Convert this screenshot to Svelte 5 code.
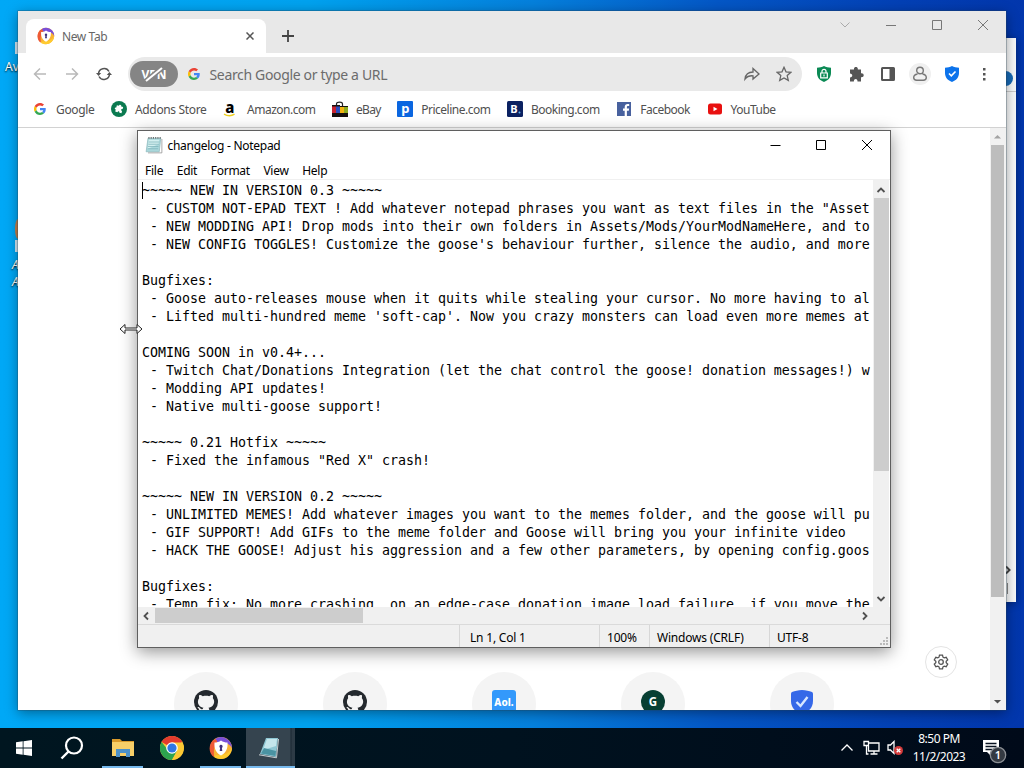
<script>
  const bookmarks = [
    { name: "Google", icon: "google" },
    { name: "Addons Store", icon: "addons" },
    { name: "Amazon.com", icon: "amazon" },
    { name: "eBay", icon: "ebay" },
    { name: "Priceline.com", icon: "priceline" },
    { name: "Booking.com", icon: "booking" },
    { name: "Facebook", icon: "facebook" },
    { name: "YouTube", icon: "youtube" },
  ]

  const menus = ["File", "Edit", "Format", "View", "Help"]

  const shortcuts = ["github", "github", "aol", "g", "shield"]

  const changelog = `~~~~~ NEW IN VERSION 0.3 ~~~~~
 - CUSTOM NOT-EPAD TEXT ! Add whatever notepad phrases you want as text files in the "Asset
 - NEW MODDING API! Drop mods into their own folders in Assets/Mods/YourModNameHere, and to
 - NEW CONFIG TOGGLES! Customize the goose's behaviour further, silence the audio, and more

Bugfixes:
 - Goose auto-releases mouse when it quits while stealing your cursor. No more having to al
 - Lifted multi-hundred meme 'soft-cap'. Now you crazy monsters can load even more memes at

COMING SOON in v0.4+...
 - Twitch Chat/Donations Integration (let the chat control the goose! donation messages!) w
 - Modding API updates!
 - Native multi-goose support!

~~~~~ 0.21 Hotfix ~~~~~
 - Fixed the infamous "Red X" crash!

~~~~~ NEW IN VERSION 0.2 ~~~~~
 - UNLIMITED MEMES! Add whatever images you want to the memes folder, and the goose will pu
 - GIF SUPPORT! Add GIFs to the meme folder and Goose will bring you your infinite video
 - HACK THE GOOSE! Adjust his aggression and a few other parameters, by opening config.goos

Bugfixes:
 - Temp fix: No more crashing, on an edge-case donation image load failure, if you move the`
</script>

{#snippet google()}
  <svg class="google" viewBox="0 0 48 48">
    <path fill="#EA4335" d="M24 9.5c3.5 0 6.7 1.2 9.2 3.6l6.9-6.9C35.9 2.4 30.5 0 24 0 14.6 0 6.5 5.4 2.6 13.2l8 6.2C12.4 13.7 17.7 9.5 24 9.5z" />
    <path fill="#4285F4" d="M47 24.5c0-1.6-.2-3.1-.4-4.5H24v9h12.900c-.6 3-2.300 5.500-4.800 7.200l7.700 6C44.400 38 47 31.800 47 24.500z" />
    <path fill="#FBBC05" d="M10.500 28.600c-.5-1.500-.8-3-.8-4.600s.3-3.100.8-4.600l-8-6.200C.9 16.500 0 20.100 0 24s.9 7.500 2.600 10.800l7.900-6.200z" />
    <path fill="#34A853" d="M24 48c6.500 0 11.900-2.100 15.900-5.800l-7.700-6c-2.200 1.500-4.900 2.300-8.200 2.300-6.300 0-11.600-4.200-13.500-9.900l-8 6.200C6.500 42.600 14.600 48 24 48z" />
  </svg>
{/snippet}

{#snippet secureBrowser()}
  <svg viewBox="0 0 24 24">
    <circle cx="12" cy="12" r="11" fill="#f9b233" />
    <path fill="#7a4fd8" d="M6 3a11 11 0 0 1 17 9c-2-4-6-6-11-5-4 0-5-2-6-4z" />
    <path fill="#ee5a35" d="M6 3C-1 7-1 17 5 21c0-4-1-8 2-13 2-2 1-4-1-5z" />
    <path fill="#ffcb2f" d="M5 21c8 5 17 0 18-9-3 5-7 7-12 7-3 0-5 0-6 2z" />
    <path fill="#fff" d="M12 4.500c2 1.500 4 2 6.500 2 .5 6-1.500 10.500-6.500 13-5-2.500-7-7-6.500-13 2.500 0 4.500-.5 6.500-2z" />
    <path fill="#41327c" d="M12 8.800a1.700 1.700 0 0 1 .9 3.100l.4 3h-2.600l.4-3a1.700 1.700 0 0 1 .9-3.100z" />
  </svg>
{/snippet}

{#snippet notepadIcon()}
  <svg viewBox="0 0 24 24">
    <path fill="#a9d7db" stroke="#8fb9bd" d="M4 3h17l-2 18H1.500z" />
    <path fill="#d4f0f0" d="M5 5h14l-1 6L3.500 17z" />
    <path fill="none" stroke="#7fb4ba" d="M5 8h14M4.500 11h14M4 14h14M3.500 17h14" />
    <path fill="none" stroke="#444" stroke-width="1.500" stroke-dasharray="1.500 1.500" d="M4.500 2.500h17" />
    <path fill="none" stroke="#8d8d8d" d="M22.500 4v18.500H4" />
  </svg>
{/snippet}

{#snippet bookmarkIcon(icon)}
  {#if icon == "google"}
    {@render google()}
  {:else}
    <svg viewBox="0 0 16 16">
      {#if icon == "addons"}
        <circle cx="8" cy="8" r="8" fill="#0b7a50" />
        <path fill="#fff" d="M5 5h2c0-2 2.500-2 2.500 0h2v2.200c-1.700 0-1.700 2 0 2V11.500H9.300c0-1.600-1.900-1.600-1.900 0H5V9.300c-1.700 0-1.700-2 0-2z" transform="rotate(15 8 8)" />
      {:else if icon == "amazon"}
        <text x="6.500" y="11.500" text-anchor="middle" font-size="15" font-weight="800">a</text>
        <path fill="none" stroke="#edcf20" stroke-width="1.500" d="M1 13.200c3.500 2 7.500 2 10.500 0" />
      {:else if icon == "ebay"}
        <path fill="none" stroke="#222" stroke-width="1.200" d="M4.500 5V3c0-2.500 6-2.500 6 0v2" />
        <path fill="#c92432" d="M0 4h4v9H0z" />
        <path fill="#2b4fbf" d="M4 4h4v9H4z" />
        <path fill="#f2b312" d="M8 5h4v8H8z" />
        <path fill="#8dac20" d="M12 5h4v8h-4z" />
        <path fill="#16100f" d="M0 12h16v4H0zM0 4h8v1.500H0zM8 5h8v1H8z" />
      {:else if icon == "priceline"}
        <rect width="16" height="16" rx="1" fill="#0a66e0" />
        <text x="8" y="11.500" text-anchor="middle" font-size="13" font-weight="700" fill="#fff">p</text>
      {:else if icon == "booking"}
        <rect width="16" height="16" rx="1.500" fill="#0b2161" />
        <text x="3.200" y="12.200" font-size="11" font-weight="700" fill="#fff">B</text>
        <circle cx="12.500" cy="11.500" r="1" fill="#5fb4f0" />
      {:else if icon == "facebook"}
        <rect x="1" y="1" width="14" height="14" fill="#48619e" />
        <path fill="#fff" d="M8.700 15V9.800H7V7.600h1.700V6c0-2 1.200-3 3-3h1.500v2h-1.100c-.9 0-1.200.4-1.200 1.200v1.400h2.200l-.3 2.200h-1.900V15z" />
      {:else}
        <rect x="1" y="2.500" width="14" height="11" rx="2.500" fill="#e8100f" />
        <path fill="#fff" d="M6.500 5.800l4 2.200-4 2.200z" />
      {/if}
    </svg>
  {/if}
{/snippet}

<div class="desktop">
  <div class="desk-label avast">Av</div>
  <div class="desk-chip top"></div>
  <div class="desk-chip orange"></div>
  <div class="desk-chip bottom"></div>
  <div class="desk-label any">A<br />A</div>

  <div class="back-window">
    <div class="back-bar"><i></i></div>
    <svg class="back-arrow" viewBox="0 0 10 10"><path d="M3 1.500L6.500 5 3 8.500" /></svg>
    <div class="back-grip"></div>
  </div>

  <section class="browser">
    <div class="tabstrip">
      <div class="tab">
        <span class="i18">{@render secureBrowser()}</span>
        <span class="tab-title">New Tab</span>
        <svg class="tab-close" viewBox="0 0 8 8"><path d="M.5.5l7 7M7.500.5l-7 7" /></svg>
      </div>
      <svg class="plus" viewBox="0 0 12 12"><path d="M6 0v12M0 6h12" /></svg>
      <div class="win-buttons">
        <svg viewBox="0 0 12 12"><path stroke="#aaa" d="M1.500 3.500L6 8l4.500-4.500" /></svg>
        <svg viewBox="0 0 12 12"><path d="M1 6.500h10" /></svg>
        <svg viewBox="0 0 12 12"><path d="M1.500 1.500h9v9h-9z" /></svg>
        <svg viewBox="0 0 12 12"><path d="M1 1l10 10M11 1L1 11" /></svg>
      </div>
    </div>

    <div class="toolbar">
      <svg class="nav off" viewBox="0 0 16 16"><path d="M14 8H2.500M8 2.500L2.500 8 8 13.500" /></svg>
      <svg class="nav off" viewBox="0 0 16 16"><path d="M2 8h11.500M8 2.500L13.500 8 8 13.500" /></svg>
      <svg class="nav" viewBox="0 0 16 16">
        <path d="M2.500 8A5.600 5.600 0 0 1 13 5.500M13.500 8A5.600 5.600 0 0 1 3 10.500" />
        <path fill="#555" stroke="none" d="M0 7h5.200L2.600 10zM10.800 9H16l-2.600-3z" />
      </svg>
      <div class="omnibox">
        <div class="vpn">VPN<svg viewBox="0 0 20 16"><path d="M2 15L18 2" stroke="#858585" stroke-width="5" /><path d="M2 15L18 2" stroke="#fff" stroke-width="2" /></svg></div>
        {@render google()}
        <span class="hint">Search Google or type a URL</span>
        <svg class="tool" viewBox="0 0 16 16"><path d="M1 13c.5-4 3-7 8-7V2.500L15 8l-6 5V9.800C5.500 9.500 3 10.500 1 13z" /></svg>
        <svg class="tool" viewBox="0 0 16 16"><path d="M8 1.300l2 4.500 4.900.5-3.700 3.300 1.100 4.800L8 11.900l-4.300 2.500 1.100-4.800L1.100 6.300l4.900-.5z" /></svg>
      </div>
      <div class="extensions">
        <svg viewBox="0 0 16 16">
          <path fill="#0b8a55" d="M8 0c2 1.300 4.500 1.700 7 1.700V7c0 4.500-3 7.500-7 9-4-1.500-7-4.500-7-9V1.700C3.500 1.700 6 1.300 8 0z" />
          <path fill="none" stroke="#fff" stroke-width="1.200" d="M6 7V5.300a2 2 0 0 1 4 0V7M4.700 7h6.600v4.800H4.700zM8 8.500v2" />
        </svg>
        <svg viewBox="0 0 16 16"><path fill="#555" d="M2 3.500h4C5.500.3 10.300.3 9.800 3.500H13v3.700c3.600-.4 3.600 4.300 0 4V15.500H9.500c.2-3.200-3.800-3.200-3.600 0H2v-4c3-.1 3-3.900 0-4z" /></svg>
        <svg viewBox="0 0 16 16"><path fill="#555" fill-rule="evenodd" d="M2.500 1h11q1.500 0 1.500 1.500v11q0 1.500-1.500 1.500h-11Q1 15 1 13.500v-11Q1 1 2.500 1zM3 3v10h6.500V3z" /></svg>
        <div class="avatar"><svg viewBox="0 0 16 16"><path fill="none" stroke="#777" stroke-width="1.400" d="M8 1.200a3.300 3.300 0 1 1 0 6.600 3.300 3.300 0 1 1 0-6.600zM5.500 8C3 8.500 1.700 10 1.700 11.500c0 2 1.500 2.700 3 2.700h6.600c1.500 0 3-.7 3-2.700C14.300 10 13 8.500 10.500 8" /></svg></div>
        <svg viewBox="0 0 16 16">
          <path fill="#0c73eb" d="M8 0c2 1.300 4.500 1.700 7 1.700V7c0 4.500-3 7.500-7 9-4-1.500-7-4.500-7-9V1.700C3.500 1.700 6 1.300 8 0z" />
          <path fill="none" stroke="#fff" stroke-width="1.600" d="M5 7.500l2.300 2.300L11.500 5.500" />
        </svg>
        <svg viewBox="0 0 16 16"><path fill="#555" d="M7 2h2.500v2.500H7zM7 7h2.500v2.500H7zM7 12h2.500v2.500H7z" /></svg>
      </div>
    </div>

    <div class="bookmarks">
      {#each bookmarks as b}
        <div class="bookmark b-{b.icon}">
          <span class="b-icon">{@render bookmarkIcon(b.icon)}</span>
          <span>{b.name}</span>
        </div>
      {/each}
    </div>

    <div class="page">
      <div class="page-body">
        <div class="customize">
          <svg viewBox="0 0 16 16">
            <path d="M6.500 1.200h3l.5 2 1.200.7 2-.6 1.500 2.600L13.200 7.300v1.400l1.500 1.400-1.500 2.600-2-.6-1.200.7-.5 2h-3l-.5-2-1.200-.7-2 .6-1.500-2.600L2.800 8.700V7.300L1.300 5.900l1.500-2.600 2 .6L6 3.200z" />
            <circle cx="8" cy="8" r="2.300" />
          </svg>
        </div>
        <div class="shortcuts">
          {#each shortcuts as s}
            <div class="shortcut">
              <svg viewBox="0 0 24 24">
                {#if s == "github"}
                  <circle cx="12" cy="12" r="12" fill="#24292e" />
                  <path fill="#f4f4f4" d="M5.300 5c1-.2 2.400.4 3.500 1.200 2-.5 4.400-.5 6.400 0C16.300 5.400 17.700 4.800 18.700 5c.5 1.300.3 2.400.1 3 3 3.700.8 9.300-4.300 9.700 1 1 .8 3 .8 6H8.700v-3c-2.500.6-3.500-.7-4-2-.3-.7-1-1.100-1.500-1.600 1.300-.6 2.300.2 3 1.200.8 1.200 1.700 1 2.600.6 0-.5.300-1 .7-1.200-5-.4-7.200-6-4.300-9.700-.3-.6-.4-1.700.1-3z" />
                {:else if s == "aol"}
                  <rect width="24" height="24" rx="3" fill="#3399fb" />
                  <text x="12" y="15.500" text-anchor="middle" font-size="10" font-weight="800" fill="#fff">Aol.</text>
                {:else if s == "g"}
                  <circle cx="12" cy="12" r="12" fill="#073f33" />
                  <text x="12" y="16" text-anchor="middle" font-size="11.500" font-weight="700" fill="#fff">G</text>
                {:else}
                  <path fill="#3568e8" d="M12 0c4 0 7 1 10 2q1 .5 1 2v7c0 7-5 11-11 14C6 22 1 18 1 11V4q0-1.500 1-2c3-1 6-2 10-2z" />
                  <path fill="none" stroke="#d8e6ff" stroke-width="2.400" d="M6.500 12l4 4 7-9" />
                {/if}
              </svg>
            </div>
          {/each}
        </div>
      </div>
      <div class="page-scroll">
        <svg viewBox="0 0 10 6"><path fill="#a3a3a3" d="M1 5l4-4 4 4z" /></svg>
        <div class="page-thumb"></div>
        <svg class="down" viewBox="0 0 10 6"><path fill="#505050" d="M1 1l4 4 4-4z" /></svg>
      </div>
    </div>
  </section>

  <section class="notepad">
    <div class="np-title">
      <span class="i18">{@render notepadIcon()}</span>
      <span class="np-name">changelog - Notepad</span>
      <svg viewBox="0 0 12 12"><path d="M1.500 6.500h10" /></svg>
      <svg viewBox="0 0 12 12"><path d="M1.500 1.500h9v9h-9z" /></svg>
      <svg viewBox="0 0 12 12"><path d="M1 1l10 10M11 1L1 11" /></svg>
    </div>
    <div class="np-menu">
      {#each menus as menu}
        <span>{menu}</span>
      {/each}
    </div>
    <div class="np-main">
      <pre class="np-text">{changelog}</pre>
      <div class="vscroll">
        <svg viewBox="0 0 10 10"><path d="M1.500 7L5 3.500 8.500 7" /></svg>
        <div class="vthumb"></div>
        <svg class="down" viewBox="0 0 10 10"><path d="M1.500 3L5 6.500 8.500 3" /></svg>
      </div>
    </div>
    <div class="hscroll">
      <svg viewBox="0 0 10 10"><path d="M7 1.500L3.500 5 7 8.500" /></svg>
      <div class="hthumb"></div>
      <svg class="right" viewBox="0 0 10 10"><path d="M3 1.500L6.500 5 3 8.500" /></svg>
    </div>
    <div class="np-status">
      <span></span>
      <span class="s-pos">Ln 1, Col 1</span>
      <span class="s-zoom">100%</span>
      <span class="s-eol">Windows (CRLF)</span>
      <span class="s-enc">UTF-8</span>
      <svg viewBox="0 0 9 9"><path fill="#bbb" d="M7 1h2v2H7zM4 4h2v2H4zM7 4h2v2H7zM1 7h2v2H1zM4 7h2v2H4zM7 7h2v2H7z" /></svg>
    </div>
  </section>

  <svg class="cursor" viewBox="0 0 24 12">
    <path d="M1 6l5-4.500V5h12V1.500L23 6l-5 4.500V7H6v3.500z" />
  </svg>

  <footer class="taskbar">
    <div class="task first">
      <svg class="start" viewBox="0 0 16 16"><path fill="#fff" d="M0 2.300L6.700 1.300V7.500H0zM7.500 1.200L16 0v7.500H7.500zM0 8.400h6.700v6.300L0 13.700zM7.500 8.400H16V16l-8.500-1.200z" /></svg>
    </div>
    <div class="task search">
      <svg viewBox="0 0 24 24"><circle cx="14" cy="9.500" r="8" fill="none" stroke="#fff" stroke-width="2.200" /><path stroke="#fff" stroke-width="2.400" d="M8.500 15.500L1.500 22.500" /></svg>
    </div>
    <div class="task open">
      <svg viewBox="0 0 24 24">
        <path fill="#d99a2b" d="M1 3h8l2 2h12v5H1z" />
        <path fill="#f7cf68" d="M1 6h22v14H1z" />
        <path fill="#4c91c8" d="M5 13h14v8h-4v-4H9v4H5z" />
      </svg>
    </div>
    <div class="task">
      <svg viewBox="0 0 24 24">
        <circle cx="12" cy="12" r="12" fill="#fcc934" />
        <path fill="#e33b2e" d="M12 12L1.600 6A12 12 0 0 1 22.400 6z" />
        <path fill="#2da44e" d="M1.600 6A12 12 0 0 0 12 24l5-9-9-1z" />
        <path fill="#fcc934" d="M12 24A12 12 0 0 0 22.400 6.500H12l5 8.500z" />
        <circle cx="12" cy="12" r="5.800" fill="#fff" />
        <circle cx="12" cy="12" r="4.600" fill="#2f77e5" />
      </svg>
    </div>
    <div class="task open">{@render secureBrowser()}</div>
    <div class="task open active">
      <svg viewBox="0 0 24 24">
        <path fill="#8fc7d3" d="M9 2h12l-2 19L3 18z" />
        <path fill="#c5e6ec" d="M10 3h10l-1 7L6 14z" />
        <path fill="#4a93a2" d="M7 12l12 3-.5 5L4 17.500z" />
        <path fill="none" stroke="#c9cfd2" d="M2 18.800l17.500 3L21.500 3" />
      </svg>
    </div>
    <div class="tray">
      <svg class="chevron" viewBox="0 0 14 14"><path d="M1.500 9.500L7 4l5.500 5.500" /></svg>
      <svg class="net" viewBox="0 0 18 16"><path d="M5.500 3h10.500v8H5.500V6M11 11v3M7.500 14h7M1 1.500h4.500v4H1zM3.500 5.500V14h2" /></svg>
      <svg class="sound" viewBox="0 0 16 16">
        <path d="M1 5h2.500L7 1.500v12L3.500 10H1z" />
        <circle cx="11.500" cy="10.500" r="4.500" fill="#d33a3a" stroke="none" />
        <path d="M9.700 8.700l3.600 3.600M13.300 8.700l-3.600 3.600" />
      </svg>
      <div class="clock"><span>8:50 PM</span><span>11/2/2023</span></div>
      <svg class="notes" viewBox="0 0 26 26">
        <path fill="#fff" d="M2 2h16v12H10v4l-4-4H2z" />
        <path stroke="#0a1422" stroke-width="1.300" d="M4.500 5.500h11M4.500 8.500h11M4.500 11.500h7" />
        <circle cx="17" cy="17" r="7.700" fill="#343a42" stroke="#8b8f94" />
        <text x="17" y="21" text-anchor="middle" font-size="11" font-weight="600" fill="#fff">1</text>
      </svg>
    </div>
  </footer>
</div>

<style>
  :global(body) {
    margin: 0;
    overflow: hidden;
  }

  .desktop {
    position: relative;
    width: 1024px;
    height: 768px;
    overflow: hidden;
    display: flex;
    flex-direction: column;
    justify-content: flex-end;
    font-family: "Noto Sans", "Open Sans", sans-serif;
    font-size: 12px;
    background: linear-gradient(90deg, #00a8f6 0%, #00a2ef 30%, #0580dc 52%, #0457c6 70%, #0340b5 88%, #0236ac 100%);
  }

  svg {
    display: block;
    flex: none;
  }

  .desk-label {
    position: absolute;
    color: #fff;
    text-shadow: 0 1px 2px #000;
  }

  .avast {
    left: 5px;
    top: 58px;
  }

  .any {
    left: 12px;
    top: 256px;
    line-height: 17px;
    font-style: italic;
  }

  .desk-chip {
    position: absolute;
    left: 15px;
    width: 6px;
    height: 12px;
    background: #d5e9f5;
  }

  .desk-chip.top { top: 42px; }
  .desk-chip.bottom { top: 240px; }
  .desk-chip.orange {
    top: 219px;
    height: 20px;
    border-radius: 50% 0 0 50%;
    background: #c98048;
  }

  /* window that peeks out on the right */
  .back-window {
    position: absolute;
    left: 900px;
    top: 38px;
    width: 116px;
    height: 564px;
    background: #f8fafb;
    box-shadow: 0 1px 8px rgba(0, 0, 0, 0.4);
  }

  .back-bar {
    height: 53px;
    border-bottom: 1px solid #ccc;
    display: flex;
    align-items: flex-end;
    justify-content: flex-end;
  }

  .back-bar i {
    width: 15px;
    height: 15px;
    margin: 0 3px 5px 0;
    border-radius: 50%;
    background: #1769b5;
  }

  .back-arrow {
    width: 10px;
    margin: 473px 0 0 103px;
    fill: none;
    stroke: #444;
    stroke-width: 2;
  }

  .back-grip {
    width: 1px;
    height: 11px;
    margin: 8px 0 0 107px;
    background: #888;
  }

  .browser {
    position: absolute;
    left: 18px;
    top: 11px;
    width: 988px;
    height: 699px;
    background: #fff;
    box-shadow: 0 0 0 0.5px rgba(40, 70, 90, 0.6), 0 3px 12px rgba(0, 0, 0, 0.4);
    display: flex;
    flex-direction: column;
  }

  .tabstrip {
    height: 42px;
    background: #e8e8e8;
    display: flex;
    align-items: flex-start;
  }

  .tab {
    box-sizing: border-box;
    width: 240px;
    height: 34px;
    margin: 8px 0 0 8px;
    padding: 0 12px 0 11px;
    border-radius: 8px 8px 0 0;
    background: #fff;
    display: flex;
    align-items: center;
    gap: 7px;
    color: #666;
  }

  .i18 {
    width: 18px;
    flex: none;
  }

  .tab-title {
    flex: 1;
    letter-spacing: -0.4px;
  }

  .tab-close {
    width: 8px;
    fill: none;
    stroke: #555;
    stroke-width: 1.5;
  }

  .plus {
    width: 12px;
    margin: 19px 0 0 16px;
    stroke: #444;
    stroke-width: 1.8;
  }

  .win-buttons {
    margin: 8px 17px 0 auto;
    display: flex;
    gap: 34px;
  }

  .win-buttons svg {
    width: 12px;
    fill: none;
    stroke: #777;
  }

  .toolbar {
    height: 42px;
    padding-left: 14px;
    display: flex;
    align-items: center;
  }

  .nav {
    width: 16px;
    margin-right: 16px;
    fill: none;
    stroke: #555;
    stroke-width: 1.5;
  }

  .nav.off {
    stroke: #b9b9b9;
  }

  .omnibox {
    width: 674px;
    height: 34px;
    border-radius: 17px;
    background: #e9e9e9;
    display: flex;
    align-items: center;
  }

  .vpn {
    position: relative;
    width: 48px;
    height: 26px;
    margin: 0 10px 0 2px;
    border-radius: 13px;
    background: #858585;
    color: #fff;
    font-size: 12px;
    font-weight: 700;
    line-height: 27px;
    text-align: center;
  }

  .vpn svg {
    position: absolute;
    left: 14px;
    top: 5px;
    width: 20px;
  }

  .google {
    width: 12px;
    height: 12px;
  }

  .hint {
    flex: 1;
    margin-left: 9.5px;
    color: #6c6c6c;
    font-size: 14px;
    letter-spacing: -0.34px;
  }

  .tool {
    width: 16px;
    margin-right: 16px;
    fill: none;
    stroke: #666;
    stroke-width: 1.3;
  }

  .tool:last-child {
    margin-right: 10px;
  }

  .extensions {
    margin-left: 14px;
    display: flex;
    align-items: center;
    gap: 16px;
  }

  .extensions svg {
    width: 16px;
  }

  .avatar {
    margin: 0 -3px;
    padding: 3px;
    border-radius: 50%;
    background: #f0f0f0;
  }

  .bookmarks {
    box-sizing: border-box;
    height: 33px;
    padding: 0 0 4px 14px;
    border-bottom: 1px solid #d2d2d2;
    display: flex;
    align-items: center;
    gap: 16.6px;
  }

  .bookmark {
    display: flex;
    align-items: center;
    gap: 8px;
    color: #505050;
    letter-spacing: -0.5px;
  }

  .b-google {
    letter-spacing: -0.35px;
  }

  .b-addons {
    letter-spacing: -0.35px;
  }

  .b-ebay {
    letter-spacing: -0.7px;
  }

  .b-icon {
    width: 16px;
    display: flex;
    justify-content: center;
  }

  .b-icon svg {
    width: 16px;
  }

  .b-google svg {
    width: 12px;
  }

  .page {
    flex: 1;
    min-height: 0;
    display: flex;
    overflow: hidden;
  }

  .page-body {
    flex: 1;
    display: flex;
    flex-direction: column;
    justify-content: flex-end;
  }

  .customize {
    width: 30px;
    height: 30px;
    margin: 0 33px -7px auto;
    border: 1px solid #e4e4e4;
    border-radius: 50%;
    display: grid;
    place-items: center;
  }

  .customize svg {
    width: 16px;
    fill: none;
    stroke: #555;
    stroke-width: 1.3;
  }

  .shortcuts {
    height: 39px;
    padding-left: 156px;
    display: flex;
    gap: 85px;
  }

  .shortcut {
    box-sizing: border-box;
    width: 64px;
    height: 64px;
    margin-top: 1px;
    padding: 18px 20px;
    border-radius: 50%;
    background: #f4f4f4;
  }

  .shortcut svg {
    width: 24px;
  }

  .page-scroll {
    width: 15px;
    padding-right: 1px;
    background: #f1f1f1;
    display: flex;
    flex-direction: column;
    align-items: center;
  }

  .page-scroll svg {
    width: 9px;
    margin: 6px 0;
  }

  .page-thumb {
    width: 13px;
    height: 452px;
    background: #bdbdbd;
  }

  .page-scroll .down {
    margin-top: auto;
  }

  .notepad {
    position: absolute;
    left: 137px;
    top: 130px;
    width: 752px;
    height: 516px;
    border: 1px solid #5f5f5f;
    background: #fff;
    box-shadow: 0 4px 16px rgba(0, 0, 0, 0.42);
    display: flex;
    flex-direction: column;
    color: #000;
  }

  .np-title {
    height: 29px;
    padding: 0 17px 1px 7px;
    display: flex;
    align-items: center;
  }

  .np-name {
    flex: 1;
    margin-left: 4.5px;
    letter-spacing: -0.28px;
  }

  .np-title > svg {
    width: 12px;
    margin-left: 34px;
    fill: none;
    stroke: #000;
  }

  .np-menu {
    box-sizing: border-box;
    height: 20px;
    padding: 2px 0 0 7px;
    border-bottom: 1px solid #f0f0f0;
    display: flex;
    align-items: center;
    gap: 13.5px;
    letter-spacing: -0.25px;
  }

  .np-main {
    height: 427px;
    display: flex;
  }

  .np-text {
    flex: 1;
    margin: 0;
    padding: 2px 0 0 4px;
    overflow: hidden;
    font: 13.3px/18px "DejaVu Sans Mono", monospace;
    letter-spacing: -0.007px;
    position: relative;
  }

  /* caret */
  .np-text::before {
    content: "";
    position: absolute;
    left: 4px;
    top: 2px;
    width: 1px;
    height: 17px;
    background: #000;
  }

  .vscroll {
    width: 16px;
    background: #f0f0f0;
    margin-right: 1px;
    display: flex;
    flex-direction: column;
    align-items: center;
  }

  .vscroll svg,
  .hscroll svg {
    width: 10px;
    fill: none;
    stroke: #505050;
    stroke-width: 1.8;
  }

  .vscroll svg {
    margin: 5px 0 3px;
  }

  .vthumb {
    width: 15px;
    height: 273px;
    background: #cdcdcd;
  }

  .vscroll .down {
    margin-top: auto;
  }

  .hscroll {
    height: 17px;
    padding: 0 20px 0 3px;
    background: #f0f0f0;
    display: flex;
    align-items: center;
  }

  .hthumb {
    width: 208px;
    height: 15px;
    margin-left: 4px;
    background: #cdcdcd;
  }

  .hscroll .right {
    margin-left: auto;
  }

  .np-status {
    flex: 1;
    background: #f0f0f0;
    border-top: 1px solid #dadada;
    display: grid;
    grid-template-columns: 322px 140px 50px 120px 1fr 11px;
    grid-template-rows: 22px;
    align-items: stretch;
    line-height: 25px;
    letter-spacing: -0.2px;
  }

  .np-status span {
    border-right: 1px solid #d7d7d7;
    padding-left: 7px;
  }

  .np-status .s-pos {
    padding-left: 10px;
  }

  .np-status .s-enc {
    border: 0;
  }

  .np-status svg {
    width: 9px;
    align-self: end;
    margin-bottom: 2px;
  }

  .cursor {
    position: absolute;
    left: 119px;
    top: 323px;
    width: 24px;
    fill: #fff;
    stroke: #222;
  }

  .taskbar {
    height: 40px;
    background: linear-gradient(90deg, #001620, #00121f 50%, #000a19);
    display: flex;
  }

  .task {
    box-sizing: border-box;
    width: 49px;
    display: grid;
    place-items: center;
    border: 0 solid transparent;
    border-width: 0 4px;
  }

  .task svg {
    width: 24px;
  }

  .task svg.start {
    width: 16px;
  }

  .task.first {
    padding-right: 1px;
  }

  .task.search svg {
    margin-right: 4px;
  }

  .task.open {
    background: linear-gradient(#76b9ed, #76b9ed) bottom / 100% 2px no-repeat padding-box;
  }

  .task.active {
    margin-left: 1px;
    padding-right: 3px;
    border-width: 0;
    background: linear-gradient(#76b9ed, #76b9ed) bottom / 100% 2px no-repeat, linear-gradient(90deg, #35444f 44px, #1a2833 45px, #2d3b46 46px);
  }

  .tray {
    margin-left: auto;
    padding-right: 17px;
    display: flex;
    align-items: center;
    color: #fff;
  }

  .tray svg {
    fill: none;
    stroke: #fff;
    stroke-width: 1.3;
  }

  .chevron { width: 14px; }

  .net {
    width: 18px;
    margin-left: 9px;
  }

  .sound {
    width: 16px;
    margin-left: 6px;
  }

  .clock {
    width: 56px;
    margin: 0 14px 0 8px;
    display: flex;
    flex-direction: column;
    align-items: center;
    line-height: 18px;
    letter-spacing: -0.5px;
    white-space: nowrap;
  }

  .tray svg.notes {
    width: 26px;
    margin-top: 5px;
    stroke: none;
  }
</style>
